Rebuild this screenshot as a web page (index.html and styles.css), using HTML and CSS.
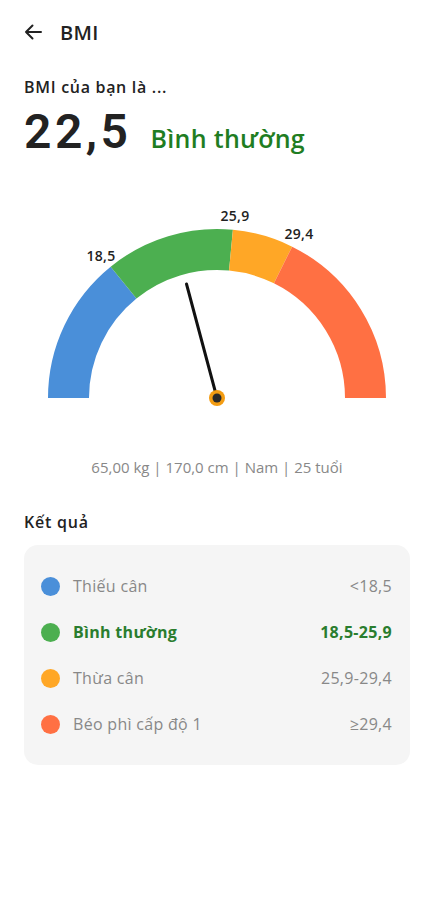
FILE: index.html
```html
<!DOCTYPE html>
<html lang="vi">
<head>
    <meta charset="UTF-8">
    <meta name="viewport" content="width=device-width, initial-scale=1.0">
    <title>BMI</title>
    <link rel="stylesheet" href="styles.css">
</head>
<body>
    <header class="top-bar">
        <svg class="back-icon" width="20" height="20" viewBox="0 0 20 20">
            <path d="M18 10H3M9.5 3.5L3 10l6.5 6.5" fill="none" stroke="#222" stroke-width="2" stroke-linecap="round" stroke-linejoin="round"/>
        </svg>
        <h1 class="title">BMI</h1>
    </header>

    <main class="content">
        <p class="subtitle">BMI của bạn là ...</p>
        <div class="result">
            <span class="result-value">22,5</span>
            <span class="result-label">Bình thường</span>
        </div>

        <svg class="gauge" width="434" height="225" viewBox="0 0 434 225">
            <path d="M68.5 203 A148.5 148.5 0 0 1 123.55 87.6" class="arc arc-blue"/>
            <path d="M123.55 87.6 A148.5 148.5 0 0 1 230.97 55.15" class="arc arc-green"/>
            <path d="M230.97 55.15 A148.5 148.5 0 0 1 283.03 69.99" class="arc arc-orange"/>
            <path d="M283.03 69.99 A148.5 148.5 0 0 1 365.5 203" class="arc arc-red"/>

            <text x="101" y="60" class="gauge-label">18,5</text>
            <text x="235" y="20" class="gauge-label">25,9</text>
            <text x="299" y="38" class="gauge-label">29,4</text>

            <line x1="217" y1="203" x2="186.5" y2="89" class="needle"/>
            <circle cx="217" cy="203" r="8" fill="#f39c12"/>
            <circle cx="217" cy="203" r="4.5" fill="#2a2a2a"/>
        </svg>

        <p class="info">65,00 kg | 170,0 cm | Nam | 25 tuổi</p>

        <h2 class="section-title">Kết quả</h2>
        <ul class="ranges">
            <li class="range">
                <span class="dot dot-blue"></span>
                <span class="range-name">Thiếu cân</span>
                <span class="range-value">&lt;18,5</span>
            </li>
            <li class="range active">
                <span class="dot dot-green"></span>
                <span class="range-name">Bình thường</span>
                <span class="range-value">18,5-25,9</span>
            </li>
            <li class="range">
                <span class="dot dot-orange"></span>
                <span class="range-name">Thừa cân</span>
                <span class="range-value">25,9-29,4</span>
            </li>
            <li class="range">
                <span class="dot dot-red"></span>
                <span class="range-name">Béo phì cấp độ 1</span>
                <span class="range-value">≥29,4</span>
            </li>
        </ul>
    </main>
</body>
</html>
```

FILE: styles.css
```css
body {
    margin: 0;
    font-family: "Open Sans", "Noto Sans", sans-serif;
    background-color: #fff;
    color: #222;
}

.top-bar {
    height: 64px;
    display: flex;
    align-items: center;
    padding: 0 24px;
}

.back-icon {
    margin-left: -1px;
}

.title {
    margin: 0 0 0 17px;
    font-size: 20px;
    font-weight: 600;
    letter-spacing: 0.3px;
}

.content {
    padding: 0 24px;
}

.subtitle {
    margin: 13px 0 0;
    font-size: 16px;
    line-height: 20px;
    font-weight: 600;
    letter-spacing: 0.7px;
}

.result {
    display: flex;
    align-items: baseline;
    margin-top: 7px;
    height: 56px;
}

.result-value {
    font-family: Roboto, sans-serif;
    font-size: 48px;
    line-height: 56px;
    font-weight: 600;
    letter-spacing: 3.5px;
}

.result-label {
    margin-left: 19px;
    font-size: 25px;
    font-weight: 600;
    color: #1f7d22;
    letter-spacing: 0.3px;
}

.gauge {
    display: block;
    margin: 35px 0 0 -24px;
}

.arc {
    fill: none;
    stroke-width: 41;
}

.arc-blue { stroke: #4a8fd9; }
.arc-green { stroke: #4caf50; }
.arc-orange { stroke: #ffa726; }
.arc-red { stroke: #ff7043; }

.gauge-label {
    font-size: 14px;
    font-weight: 600;
    fill: #222;
    text-anchor: middle;
    dominant-baseline: central;
    letter-spacing: 0.3px;
}

.needle {
    stroke: #111;
    stroke-width: 3;
    stroke-linecap: round;
}

.info {
    margin: 37px 0 0;
    text-align: center;
    font-size: 15px;
    line-height: 20px;
    color: #888;
}

.section-title {
    margin: 35px 0 0;
    font-size: 16px;
    line-height: 20px;
    font-weight: 600;
    letter-spacing: 0.8px;
}

.ranges {
    list-style-type: none;
    margin: 13px 0 0;
    padding: 18px 18px 18px 17px;
    background: #f5f5f5;
    border-radius: 14px;
}

.range {
    display: flex;
    align-items: center;
    height: 46px;
    font-size: 16px;
    color: #888;
    letter-spacing: 0.3px;
}

.dot {
    width: 19px;
    height: 19px;
    border-radius: 50%;
    margin-right: 13px;
}

.dot-blue { background: #4a8fd9; }
.dot-green { background: #4caf50; }
.dot-orange { background: #ffa726; }
.dot-red { background: #ff7043; }

.range-name {
    flex: 1;
}

.range.active {
    color: #2a7d2e;
    font-weight: 700;
}
```
